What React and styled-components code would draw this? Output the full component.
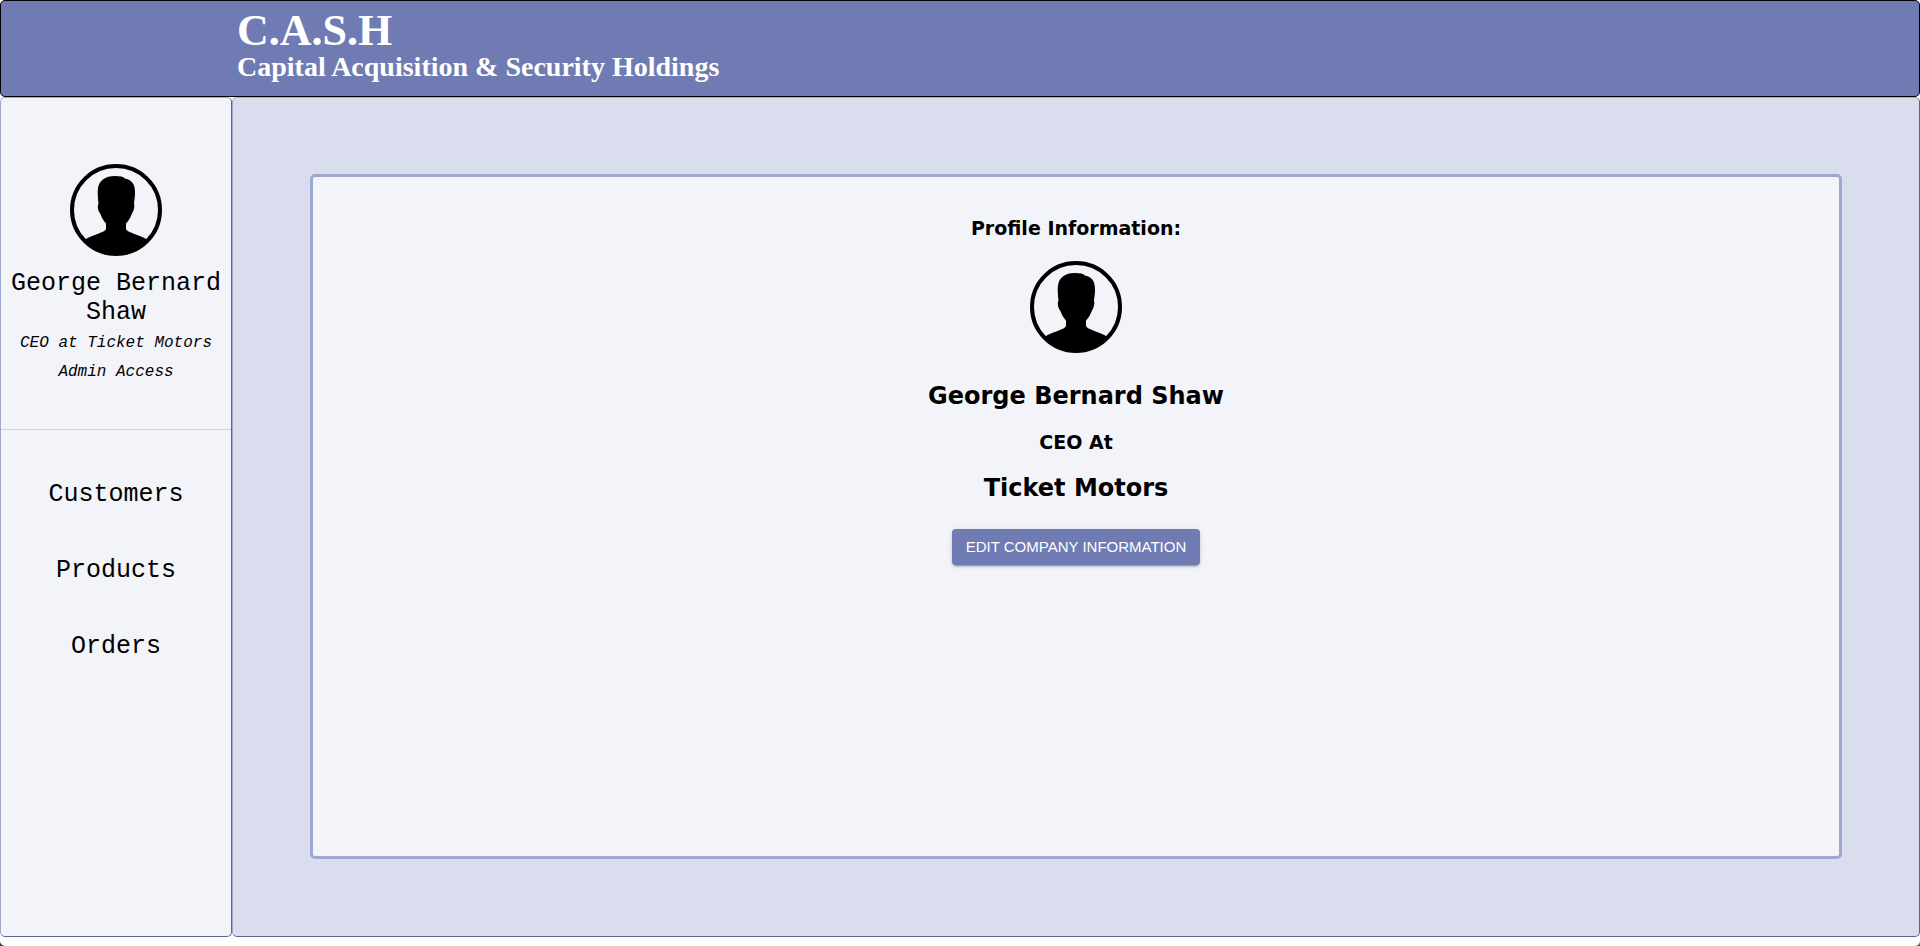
import React from "react";
import styled, { createGlobalStyle } from "styled-components";

const GlobalStyle = createGlobalStyle`
  *, *::before, *::after { box-sizing: border-box; }
  html { background: linear-gradient(90deg, #1d3557, #35668c); }
  body { margin: 0; }
  h1, h2, h3, p { margin: 0; }
`;

const serif = `"Liberation Serif", serif`;
const mono = `"Liberation Mono", monospace`;
const sans = `"DejaVu Sans", sans-serif`;

const Page = styled.div`
  min-height: 100vh;
  display: flex;
  flex-direction: column;
  padding-bottom: 9px;
  background: #ffffff;
  border-radius: 0 0 5px 5px;
  color: #000000;
`;

const Header = styled.header`
  padding: 8px 16px 15px 236px;
  background: #6f7bb2;
  border: 1px solid #000000;
  border-radius: 5px;
  color: #ffffff;
  font-family: ${serif};
`;

const Brand = styled.h1`
  font-size: 44px;
  line-height: 44px;
`;

const Tagline = styled.p`
  font-size: 28px;
  line-height: 28px;
  font-weight: 700;
`;

const Body = styled.div`
  flex: 1;
  display: flex;
`;

const Panel = styled.div`
  border: 1px solid;
  border-color: #9fa8d1 #5f658a #5f658a #9fa8d1;
  border-radius: 5px;
`;

const Sidebar = styled(Panel).attrs({ as: "aside" })`
  flex: 0 0 232px;
  background: #f3f4f9;
  font-family: ${mono};
  text-align: center;
`;

const UserSummary = styled.section`
  display: flex;
  flex-direction: column;
  align-items: center;
  padding: 66px 8px 42px;
  border-bottom: 1px solid #d2d3da;
`;

const UserName = styled.p`
  margin: 13px 0 2px;
  font-size: 25px;
  line-height: 29px;
`;

const UserDetail = styled.p`
  font-size: 16px;
  line-height: 29px;
  font-style: italic;
`;

const Nav = styled.nav`
  display: flex;
  flex-direction: column;
  align-items: center;
  gap: 47px;
  padding-top: 50px;
`;

const NavLink = styled.a`
  color: inherit;
  font-size: 25px;
  line-height: 29px;
  text-decoration: none;
`;

const Main = styled(Panel).attrs({ as: "main" })`
  flex: 1;
  display: flex;
  padding: 76px 77px 77px;
  background: #dadded;
`;

const Card = styled.section`
  flex: 1;
  display: flex;
  flex-direction: column;
  align-items: center;
  padding: 39px 16px;
  background: #f3f4f9;
  border: 3px solid #9fa8d1;
  border-radius: 5px;
  font-family: ${sans};
`;

const Subheading = styled.h3`
  font-size: 19px;
  line-height: 24px;
`;

const Heading = styled.h2`
  font-size: 24px;
  line-height: 28px;
`;

const CardAvatar = styled.div`
  margin: 21px 0 29px;
`;

const Role = styled.div`
  display: flex;
  flex-direction: column;
  align-items: center;
  gap: 20px;
`;

const Button = styled.button`
  margin-top: 27px;
  padding: 6px 14px;
  border: 0;
  border-radius: 4px;
  background: #6f7bb2;
  color: #ffffff;
  font-family: "Liberation Sans", sans-serif;
  font-size: 15px;
  line-height: 24px;
  font-weight: 400;
  text-transform: uppercase;
  cursor: pointer;
  box-shadow: 0 3px 1px -2px rgba(0, 0, 0, 0.2), 0 2px 2px rgba(0, 0, 0, 0.14),
    0 1px 5px rgba(0, 0, 0, 0.12);
`;

const AvatarImage = styled.svg`
  display: block;
  width: 92px;
  height: 92px;
`;

function Avatar() {
  return (
    <AvatarImage viewBox="0 0 92 92" role="img" aria-label="Profile picture">
      <circle cx="46" cy="46" r="44" fill="none" stroke="#000" strokeWidth="4" />
      <path d="M45 12C50 12 53.5 12.6 55.5 14.8C62 16 65 20.5 65 28C65 33 64.5 36 63.9 39.5C65 41.5 64 47 61.8 50C60.5 53.5 58.8 56.5 56 59.5V65C57 68.5 69 70.5 77 75.5A43 43 0 0 1 15 75.5C23 70.5 35 68.5 36 65V59.5C33.3 56.5 31.6 53.5 30.4 50C27.7 47 27.2 42 28.5 39.5C28 35 27.6 31 27.8 26C28.4 16.5 35 12 45 12Z" />
    </AvatarImage>
  );
}

const links = ["Customers", "Products", "Orders"];

export default function App() {
  return (
    <>
      <GlobalStyle />
      <Page>
        <Header>
          <Brand>C.A.S.H</Brand>
          <Tagline>Capital Acquisition &amp; Security Holdings</Tagline>
        </Header>
        <Body>
          <Sidebar>
            <UserSummary>
              <Avatar />
              <UserName>George Bernard Shaw</UserName>
              <UserDetail>CEO at Ticket Motors</UserDetail>
              <UserDetail>Admin Access</UserDetail>
            </UserSummary>
            <Nav aria-label="Main">
              {links.map((label) => (
                <NavLink key={label} href={`#${label.toLowerCase()}`}>
                  {label}
                </NavLink>
              ))}
            </Nav>
          </Sidebar>
          <Main>
            <Card>
              <Subheading>Profile Information:</Subheading>
              <CardAvatar>
                <Avatar />
              </CardAvatar>
              <Role>
                <Heading>George Bernard Shaw</Heading>
                <Subheading>CEO At</Subheading>
                <Heading>Ticket Motors</Heading>
              </Role>
              <Button type="button">Edit Company Information</Button>
            </Card>
          </Main>
        </Body>
      </Page>
    </>
  );
}
